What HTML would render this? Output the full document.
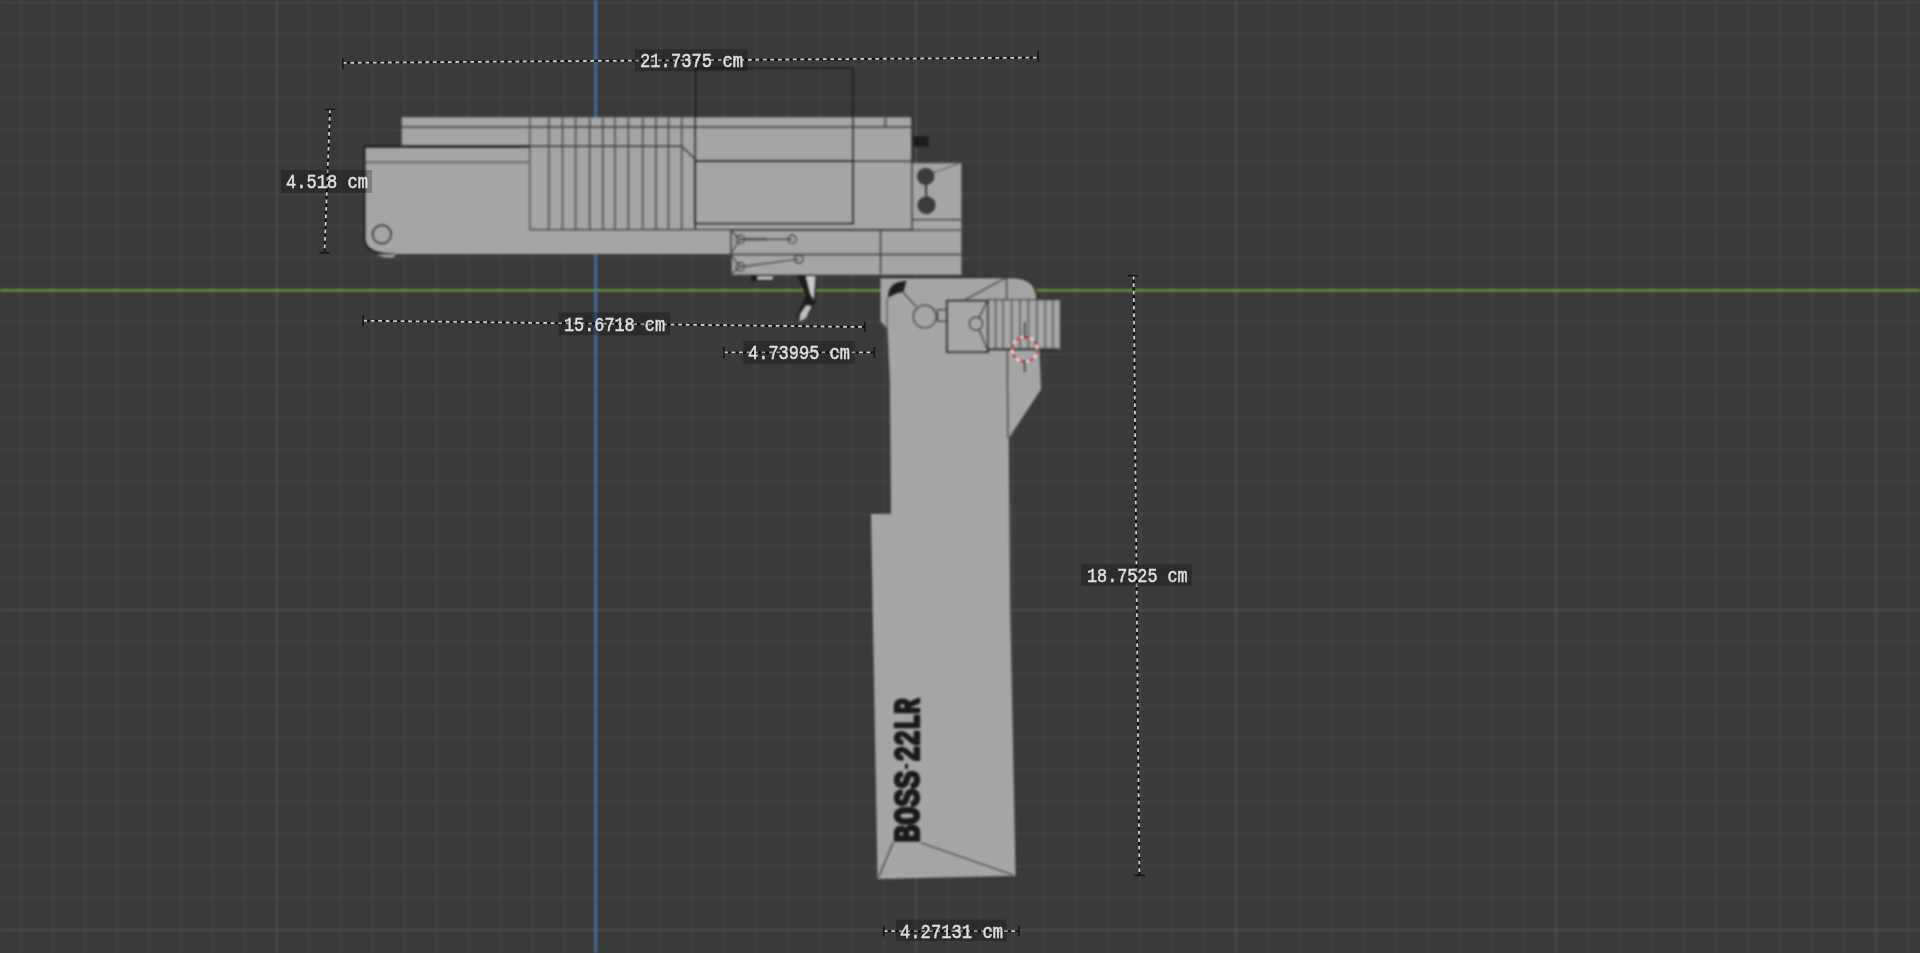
<!DOCTYPE html>
<html><head><meta charset="utf-8">
<style>
html,body{margin:0;padding:0;background:#3a3a3a;overflow:hidden;width:1920px;height:953px;}
svg{display:block;position:absolute;left:0;top:0;}
#wrap{position:absolute;left:0;top:0;width:1920px;height:953px;filter:blur(1px);}
text{font-family:"Liberation Mono",monospace;}
</style></head>
<body><div id="wrap">
<svg width="1920" height="953" viewBox="0 0 1920 953">
<defs>
<pattern id="gminor" x="20.2" y="1.7" width="31.985" height="32" patternUnits="userSpaceOnUse">
<rect x="0" y="0" width="1.3" height="32" fill="#474747"/>
<rect x="0" y="0" width="31.985" height="1.3" fill="#474747"/>
</pattern>
</defs>
<rect x="0" y="0" width="1920" height="953" fill="#3a3a3a"/>
<rect x="0" y="0" width="1920" height="953" fill="url(#gminor)"/>
<g id="major" stroke="#515151" stroke-width="1.4">
<line x1="276.6" y1="0" x2="276.6" y2="953"/>
<line x1="1236" y1="0" x2="1236" y2="953"/>
<line x1="1556" y1="0" x2="1556" y2="953"/>
<line x1="1876" y1="0" x2="1876" y2="953"/>
<line x1="916" y1="0" x2="916" y2="953"/>
<line x1="0" y1="610" x2="1920" y2="610"/>
<line x1="0" y1="930" x2="1920" y2="930"/>
</g>
<line x1="0" y1="290.3" x2="1920" y2="290.3" stroke="#5e8c35" stroke-width="2.8"/>
<line x1="595.6" y1="0" x2="595.6" y2="953" stroke="#4670ad" stroke-width="2.6"/>

<!-- ===== upper assembly ===== -->
<g id="upper">
<!-- wire rect above slide -->
<path d="M695.5 117 V67.8 H853 V117" fill="none" stroke="#1e1e1e" stroke-width="1.8"/>
<!-- silhouette -->
<path d="M401.7 117.2 H911 V163.3 H961.4 V274.7 H731 V253.9 H394 C377 254 366 251 364 240 V146.4 H401.7 Z" fill="#a4a5a6"/>
<!-- lines -->
<g stroke="#3c3c3c" stroke-width="1.4" fill="none">
<line x1="401.7" y1="127" x2="911" y2="127"/>
<line x1="364" y1="146.6" x2="529.8" y2="146.6" stroke="#2e2e2e" stroke-width="2"/>
<line x1="364" y1="162.4" x2="529.8" y2="162.4" stroke="#6e6e6e" stroke-width="2.4"/>
<path d="M529.8 146.2 H681.7 L695.2 159.3"/>
<line x1="529.8" y1="229.6" x2="912" y2="229.6"/>
<line x1="695.2" y1="161.2" x2="912" y2="161.2"/>
<rect x="695.2" y="161.2" width="157.8" height="62.4" stroke="#2a2a2a" stroke-width="1.6"/>
<line x1="885.4" y1="117.2" x2="885.4" y2="127"/>
<line x1="912" y1="127" x2="912" y2="230"/>
<line x1="912" y1="219.6" x2="961.4" y2="219.6"/>
<line x1="731" y1="230.1" x2="961.4" y2="230.1"/>
<line x1="731" y1="254.5" x2="961.4" y2="254.5"/>
<line x1="880.6" y1="230.1" x2="880.6" y2="274.5"/>
<line x1="731" y1="230.1" x2="731" y2="274.5"/>
</g>
<g stroke="#4a4a4a" stroke-width="1.5" fill="none">
<line x1="529.8" y1="117.2" x2="529.8" y2="229.6" stroke="#555"/>
<line x1="548.9" y1="117.2" x2="548.9" y2="229.6"/>
<line x1="562.5" y1="117.2" x2="562.5" y2="229.6"/>
<line x1="575.6" y1="117.2" x2="575.6" y2="229.6"/>
<line x1="589.6" y1="117.2" x2="589.6" y2="229.6"/>
<line x1="602.8" y1="117.2" x2="602.8" y2="229.6"/>
<line x1="615" y1="117.2" x2="615" y2="229.6"/>
<line x1="628.4" y1="117.2" x2="628.4" y2="229.6"/>
<line x1="642.7" y1="117.2" x2="642.7" y2="229.6"/>
<line x1="655.9" y1="117.2" x2="655.9" y2="229.6"/>
<line x1="668.5" y1="117.2" x2="668.5" y2="229.6"/>
<line x1="681.7" y1="117.2" x2="681.7" y2="229.6"/>
<line x1="695.2" y1="117.2" x2="695.2" y2="229.6" stroke="#262626"/>
</g>
<line x1="853" y1="117" x2="853" y2="162" stroke="#2a2a2a" stroke-width="1.5"/>
<!-- outline of body top -->
<path d="M394 254.5 C377 254.5 366 251 364.5 240 V146.6 H529.8" fill="none" stroke="#1e1e1e" stroke-width="2"/>
<path d="M376 254.5 Q384 258 393 257.5 L396 254.5 Z" fill="#b0b0b0"/>
<circle cx="381.9" cy="234.4" r="9.3" fill="none" stroke="#383838" stroke-width="1.6"/>
<!-- black block -->
<rect x="913.4" y="136.5" width="15.2" height="10.5" fill="#1c1c1c"/>
<!-- rear circles -->
<line x1="925.7" y1="176.4" x2="926.5" y2="205.2" stroke="#3a3a3a" stroke-width="2"/>
<line x1="930" y1="174" x2="959" y2="163.5" stroke="#555" stroke-width="1"/>
<circle cx="925.7" cy="176.4" r="8.7" fill="#3c3c3c"/>
<circle cx="926.5" cy="205.2" r="9" fill="#3c3c3c"/>
<!-- trigger mech lines -->
<g stroke="#3c3c3c" stroke-width="1.2" fill="none">
<path d="M731 231 L740.3 239.3 L731 253"/>
<line x1="740.3" y1="239.3" x2="792.2" y2="239.3"/>
<line x1="745" y1="239.3" x2="767" y2="239.3" stroke-width="2"/>
<circle cx="740.3" cy="239.3" r="4.2"/>
<circle cx="792.2" cy="239.3" r="4.2"/>
<path d="M731 255 L740.3 266.9 L731 274"/>
<line x1="740.3" y1="266.9" x2="798.8" y2="259"/>
<circle cx="740.3" cy="266.9" r="4.2"/>
<circle cx="798.8" cy="259" r="4.2"/>
</g>
</g>

<!-- ===== trigger ===== -->
<path d="M750.5 275 H773.6 V281 H757 L752 282 Z" fill="#1e1e1e"/>
<rect x="757" y="276" width="16" height="4" fill="#b4b4b4"/>
<path d="M797 275 H816 L816 300 L812 310 L806 318 L799 323 L797 316 L802 304 L806 296 L802 286 Z" fill="#1c1c1c"/>
<path d="M805.5 276 H815.6 L814 300 L810 294 Z" fill="#c8c8c8"/>
<path d="M806 305 L812 306 L806 318 L799 322 L800 314 Z" fill="#bdbdbd"/>

<!-- ===== grip ===== -->
<g id="grip">
<path d="M880.6 277.6 H1012.5 Q1036.5 278 1037 299 L1041.1 389.2 L1008.8 438 L1010.1 606 L1014 796 L1015.5 875.7 L877.6 878.9 L871 514 L891 513.8 L889.9 380 L887.5 329 L880.6 321.2 Z" fill="#a4a5a6"/>
<path d="M886.9 298 V329" stroke="#555" stroke-width="1.2"/>
<g stroke="#3a3a3a" stroke-width="1.2" fill="none">
<line x1="1006.5" y1="278" x2="1008" y2="438"/>
<line x1="965" y1="299.7" x2="1005.5" y2="278"/>
<line x1="902.8" y1="292.2" x2="916" y2="306.3"/>
<circle cx="924.75" cy="316.6" r="11.4"/>
<rect x="937.5" y="309.6" width="9.4" height="11.7"/>
<line x1="893" y1="842.8" x2="878.5" y2="877.5"/>
<line x1="920.7" y1="842.8" x2="1013" y2="875"/>
</g>
<path d="M880.6 277.6 H1012.5 Q1036.5 278 1037 299" stroke="#2e2e2e" stroke-width="1.4" fill="none"/>
<path d="M887.7 297.7 Q888.5 290 891 286.7 Q896 281.5 906.4 280.8 L903.5 291.8 Q898 292.5 895.4 294 Z" fill="#1e1e1e"/>
<!-- box -->
<rect x="946.9" y="300.6" width="41.2" height="51.6" fill="#a6a7a8" stroke="#262626" stroke-width="1.6"/>
<rect x="988.1" y="299.7" width="72.2" height="49.7" fill="#a6a7a8" stroke="#3a3a3a" stroke-width="1"/>
<line x1="988" y1="349.4" x2="1058" y2="349.4" stroke="#262626" stroke-width="1.8"/>
<g stroke="#555" stroke-width="1.4">
<line x1="995.6" y1="300" x2="995.6" y2="349"/>
<line x1="1003.1" y1="300" x2="1003.1" y2="349"/>
<line x1="1011.6" y1="300" x2="1011.6" y2="349"/>
<line x1="1020" y1="300" x2="1020" y2="349"/>
<line x1="1028.4" y1="300" x2="1028.4" y2="349"/>
<line x1="1036.9" y1="300" x2="1036.9" y2="349"/>
<line x1="1045.3" y1="300" x2="1045.3" y2="349"/>
<line x1="1052.8" y1="300" x2="1052.8" y2="349"/>
</g>
<g stroke="#3a3a3a" stroke-width="1.2" fill="none">
<circle cx="976" cy="323.7" r="6.6"/>
<line x1="987" y1="301.5" x2="979" y2="318"/>
<line x1="979" y1="329" x2="987" y2="349"/>
</g>
<!-- text BOSS 22LR -->
<g transform="translate(919,843.8) rotate(-90)" font-family="Liberation Sans" font-weight="bold" font-size="37" fill="#1a1a1a" stroke="#1a1a1a" stroke-width="2.4" stroke-linejoin="round">
<text x="1" y="0" textLength="72" lengthAdjust="spacingAndGlyphs">BOSS</text>
<rect x="75" y="-14" width="5" height="3" stroke="none"/>
<text x="82" y="0" textLength="63.5" lengthAdjust="spacingAndGlyphs">22LR</text>
</g>
</g>

<!-- 3D cursor -->
<g>
<circle cx="1024.7" cy="349.4" r="12.5" fill="none" stroke="#f0f0f0" stroke-width="2"/>
<circle cx="1024.7" cy="349.4" r="12.5" fill="none" stroke="#d02020" stroke-width="2" stroke-dasharray="4.9 4.9"/>
<line x1="1024.7" y1="322" x2="1024.7" y2="339" stroke="#222" stroke-width="1.3"/>
<line x1="1024.7" y1="360" x2="1024.7" y2="372" stroke="#222" stroke-width="1.3"/>
</g>

</svg>
</div>
<svg id="top" style="will-change:transform" width="1920" height="953" viewBox="0 0 1920 953">
<!-- ===== dimensions ===== -->
<g id="dims" stroke-width="2">
<g>
<line x1="342.9" y1="62.85" x2="1038" y2="57.6" stroke="#111"/>
<line x1="342.9" y1="62.85" x2="1038" y2="57.6" stroke="#d0d0d0" stroke-width="1.8" stroke-dasharray="3.8 3.7"/>
<line x1="342.9" y1="58" x2="342.9" y2="69" stroke="#111" stroke-width="1.5"/>
<line x1="1038.1" y1="51" x2="1038.1" y2="62" stroke="#111" stroke-width="1.5"/>
</g>
<g>
<line x1="330" y1="109.5" x2="324.5" y2="252.8" stroke="#111"/>
<line x1="330" y1="109.5" x2="324.5" y2="252.8" stroke="#d0d0d0" stroke-width="1.8" stroke-dasharray="3.8 3.7"/>
<line x1="325" y1="109.5" x2="335" y2="109.5" stroke="#111" stroke-width="1.5"/>
<line x1="319.5" y1="252.8" x2="329.5" y2="252.8" stroke="#111" stroke-width="1.5"/>
</g>
<g>
<line x1="363.2" y1="320.7" x2="864.8" y2="327" stroke="#111"/>
<line x1="363.2" y1="320.7" x2="864.8" y2="327" stroke="#d0d0d0" stroke-width="1.8" stroke-dasharray="3.8 3.7"/>
<line x1="363.2" y1="315" x2="363.2" y2="326" stroke="#111" stroke-width="1.5"/>
<line x1="864.8" y1="322" x2="864.8" y2="332" stroke="#111" stroke-width="1.5"/>
</g>
<g>
<line x1="724" y1="352.4" x2="874.4" y2="352.4" stroke="#111"/>
<line x1="724" y1="352.4" x2="874.4" y2="352.4" stroke="#d0d0d0" stroke-width="1.8" stroke-dasharray="3.8 3.7"/>
<line x1="724" y1="347" x2="724" y2="358" stroke="#111" stroke-width="1.5"/>
<line x1="874.4" y1="347" x2="874.4" y2="358" stroke="#111" stroke-width="1.5"/>
</g>
<g>
<line x1="1133.6" y1="275.7" x2="1139.4" y2="875.4" stroke="#111"/>
<line x1="1133.6" y1="275.7" x2="1139.4" y2="875.4" stroke="#d0d0d0" stroke-width="1.8" stroke-dasharray="3.8 3.7"/>
<line x1="1128" y1="275.7" x2="1138" y2="275.7" stroke="#111" stroke-width="1.5"/>
<line x1="1134.4" y1="875.4" x2="1145" y2="875.4" stroke="#111" stroke-width="1.5"/>
</g>
<g>
<line x1="883.8" y1="931.2" x2="1019" y2="931.2" stroke="#111"/>
<line x1="883.8" y1="931.2" x2="1019" y2="931.2" stroke="#d0d0d0" stroke-width="1.8" stroke-dasharray="3.8 3.7"/>
<line x1="883.8" y1="925.5" x2="883.8" y2="936.5" stroke="#111" stroke-width="1.5"/>
<line x1="1019" y1="925.5" x2="1019" y2="936.5" stroke="#111" stroke-width="1.5"/>
</g>
</g>
<g id="labels" font-size="19.5" fill="#e0e0e0" stroke="#e0e0e0" stroke-width="0.45">
<rect x="635" y="49.2" width="112.5" height="22" fill="#000" fill-opacity="0.25" stroke="none"/>
<text x="640" y="67" textLength="103" lengthAdjust="spacingAndGlyphs">21.7375 cm</text>
<rect x="281" y="170" width="91" height="23" fill="#000" fill-opacity="0.25" stroke="none"/>
<text x="286" y="188" textLength="82" lengthAdjust="spacingAndGlyphs">4.518 cm</text>
<rect x="558.4" y="312.4" width="111.8" height="22.9" fill="#000" fill-opacity="0.25" stroke="none"/>
<text x="564" y="330.5" textLength="101" lengthAdjust="spacingAndGlyphs">15.6718 cm</text>
<rect x="743.3" y="340.8" width="111.7" height="23.5" fill="#000" fill-opacity="0.25" stroke="none"/>
<text x="748" y="359" textLength="102" lengthAdjust="spacingAndGlyphs">4.73995 cm</text>
<rect x="1081" y="564.3" width="110.7" height="21.7" fill="#000" fill-opacity="0.25" stroke="none"/>
<text x="1087" y="582.3" textLength="100.7" lengthAdjust="spacingAndGlyphs">18.7525 cm</text>
<rect x="896" y="919.6" width="110.7" height="21.4" fill="#000" fill-opacity="0.25" stroke="none"/>
<text x="900" y="937.5" textLength="103" lengthAdjust="spacingAndGlyphs">4.27131 cm</text>
</g>
</svg>
</body></html>
